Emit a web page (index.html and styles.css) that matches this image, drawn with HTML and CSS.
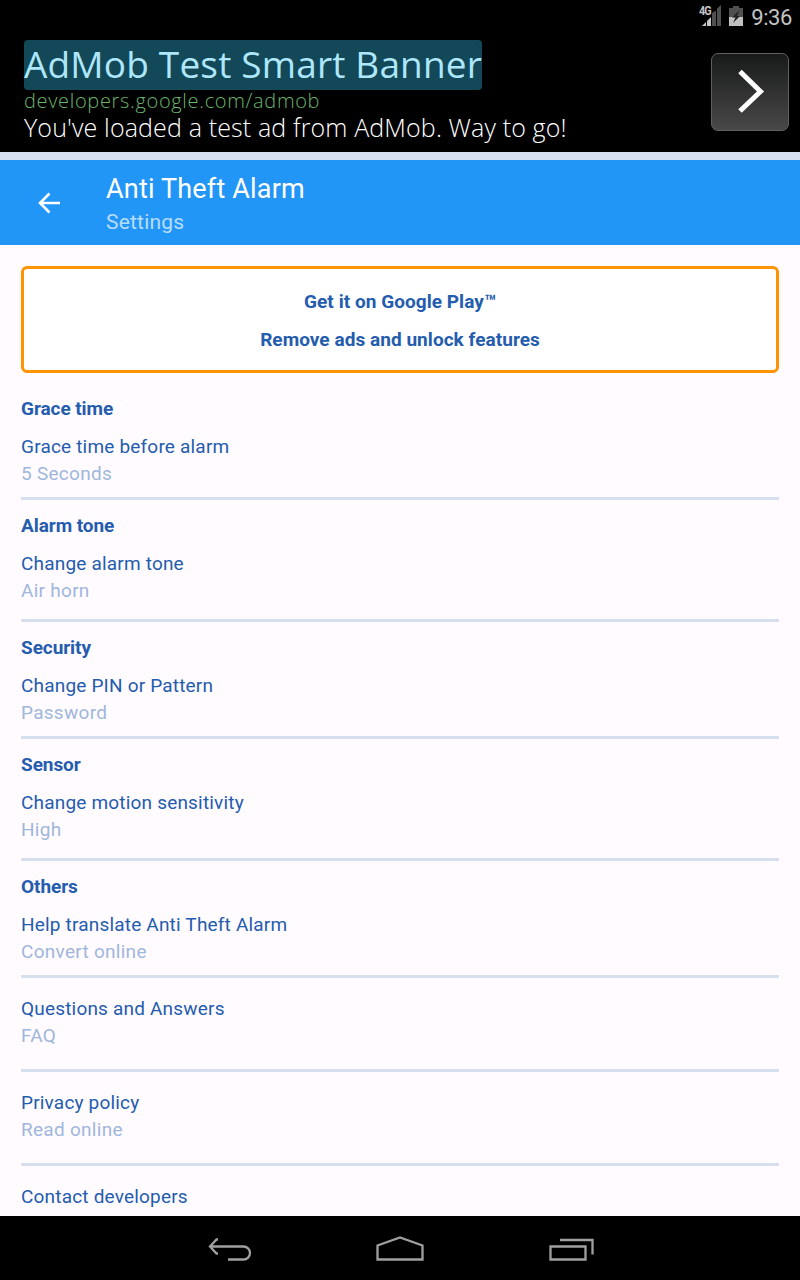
FILE: index.html
```html
<!DOCTYPE html>
<html lang="en">
<head>
<meta charset="utf-8">
<title>Anti Theft Alarm</title>
<link rel="stylesheet" href="styles.css">
</head>
<body>
<div class="screen">
  <div class="status">
    <svg class="signal" width="24" height="24" viewBox="0 0 24 24">
      <path d="M4 22l4-4v4zM9 17l4-4v9H9z" fill="#c8c8c8"/>
      <path d="M14 9l4-2.500V22h-4zM19 4.500L23 1v21h-4z" fill="#505050"/>
    </svg>
    <span class="net">4G</span>
    <svg class="battery" width="14" height="22" viewBox="0 0 14 22">
      <path d="M0 3h4V1h6v2h4v9H0z" fill="#505050"/>
      <path d="M0 12h14v9H0z" fill="#c0c0c0"/>
      <path d="M10.500 5L3 12.500h3.500L4 18l7-7H8z" fill="#222"/>
    </svg>
    <span class="clock">9:36</span>
  </div>
  <div class="ad">
    <div class="ad-copy">
      <div class="ad-title">AdMob Test Smart Banner</div>
      <div class="ad-url">developers.google.com/admob</div>
      <div class="ad-text">You've loaded a test ad from AdMob. Way to go!</div>
    </div>
    <div class="ad-go">
      <svg width="76" height="76" viewBox="0 0 76 76"><path d="M28 17.500L48.500 37.500 28 57" fill="none" stroke="#fff" stroke-width="5"/></svg>
    </div>
  </div>
  <header class="bar">
    <svg class="back" width="24" height="24" viewBox="0 0 24 24"><path d="M23 12H3.500M12.500 2.500L3 12l9.500 9.500" fill="none" stroke="#fff" stroke-width="2.600"/></svg>
    <div>
      <div class="bar-title">Anti Theft Alarm</div>
      <div class="bar-sub">Settings</div>
    </div>
  </header>
  <main class="list">
    <div class="promo"><p>Get it on Google Play™</p><p>Remove ads and unlock features</p></div>
    <section class="row first"><h2>Grace time</h2><p>Grace time before alarm</p><small>5 Seconds</small></section>
    <section class="row tall"><h2>Alarm tone</h2><p>Change alarm tone</p><small>Air horn</small></section>
    <section class="row"><h2>Security</h2><p>Change PIN or Pattern</p><small>Password</small></section>
    <section class="row tall"><h2>Sensor</h2><p>Change motion sensitivity</p><small>High</small></section>
    <section class="row"><h2>Others</h2><p>Help translate Anti Theft Alarm</p><small>Convert online</small></section>
    <section class="row plain"><p>Questions and Answers</p><small>FAQ</small></section>
    <section class="row plain"><p>Privacy policy</p><small>Read online</small></section>
    <section class="row plain"><p>Contact developers</p><small>Feedback</small></section>
  </main>
  <nav class="nav">
    <svg width="440" height="64" viewBox="0 0 440 64" fill="none" stroke="#a0a0a0" stroke-width="2.300">
      <path d="M30 30.500H63.500a6.500 6.500 0 0 1 0 13H48M38 23.500h-1.500L30 30.500l6.500 7H38"/>
      <path d="M197.500 43.500V29.500L220 21.500l22.500 8v14z"/>
      <path d="M370.500 30.500h35v13h-35zM380 24h32.500v14.500"/>
    </svg>
  </nav>
</div>
</body>
</html>
```
FILE: styles.css
```css
* { box-sizing: border-box; }
body { margin: 0; background: #000; font-family: Roboto, sans-serif; }
h2, p { margin: 0; }
.screen { width: 800px; height: 1280px; display: flex; flex-direction: column; overflow: hidden; }
.status { position: relative; height: 33px; flex: none; display: flex; justify-content: flex-end; padding: 4px 8px 0 0; color: #c3c3c3; }
.signal { margin-right: 7px; }
.net { position: absolute; left: 699px; top: 5px; font-size: 12px; line-height: 12px; font-weight: 700; letter-spacing: -1px; transform: scaleX(.9); transform-origin: left; }
.battery { margin: 1px 8px 0 0; }
.clock { font-size: 22px; line-height: 28px; letter-spacing: -.4px; }
.ad { height: 119px; flex: none; display: flex; justify-content: space-between; padding: 7px 11px 0 24px; font-family: "Open Sans", sans-serif; white-space: nowrap; }
.ad-title { height: 50px; width: 458px; border-radius: 4px; background: #124858; color: #aee6fa; font-size: 37px; line-height: 48px; letter-spacing: .17px; }
.ad-url { height: 22px; font-size: 20px; line-height: 22px; letter-spacing: .67px; color: #69b46d; font-weight: 300; }
.ad-text { font-size: 25px; line-height: 30px; letter-spacing: .14px; color: #fff; font-weight: 300; }
.ad-go { width: 78px; height: 78px; margin-top: 13px; border: 1px solid #606060; border-radius: 7px; background: linear-gradient(#181b19, #484848); }
.bar { height: 93px; flex: none; display: flex; border-top: 8px solid #d6dff0; background: #2296f7; }
.back { margin: 31px 45px 0 37px; }
.bar-title { color: #fff; font-size: 27px; line-height: 32px; padding-top: 13px; letter-spacing: .18px; }
.bar-sub { color: #b8dcfc; font-size: 21px; line-height: 34px; letter-spacing: .2px; }
.list { height: 971px; flex: none; overflow: hidden; background: #fffbff; padding: 21px 21px 0; color: #245cae; }
.promo { height: 107px; border: 3px solid #ff9400; border-radius: 6px; background: #fff; padding-top: 14px; text-align: center; font-weight: 700; font-size: 19px; line-height: 38px; letter-spacing: .05px; }
.row { border-bottom: 3px solid #d6dff0; padding: 12px 0 10px; line-height: 27px; font-size: 19px; letter-spacing: .19px; }
.row.first { padding-top: 22px; }
.row.tall { padding-bottom: 15px; }
.row.plain { padding: 17px 0 20px; }
.row h2 { font-size: 19px; margin-bottom: 11px; letter-spacing: -.07px; }
.row small { display: block; font-size: 19px; color: #9fb7dc; letter-spacing: .28px; }
.nav { height: 64px; flex: none; display: flex; justify-content: center; }
```
